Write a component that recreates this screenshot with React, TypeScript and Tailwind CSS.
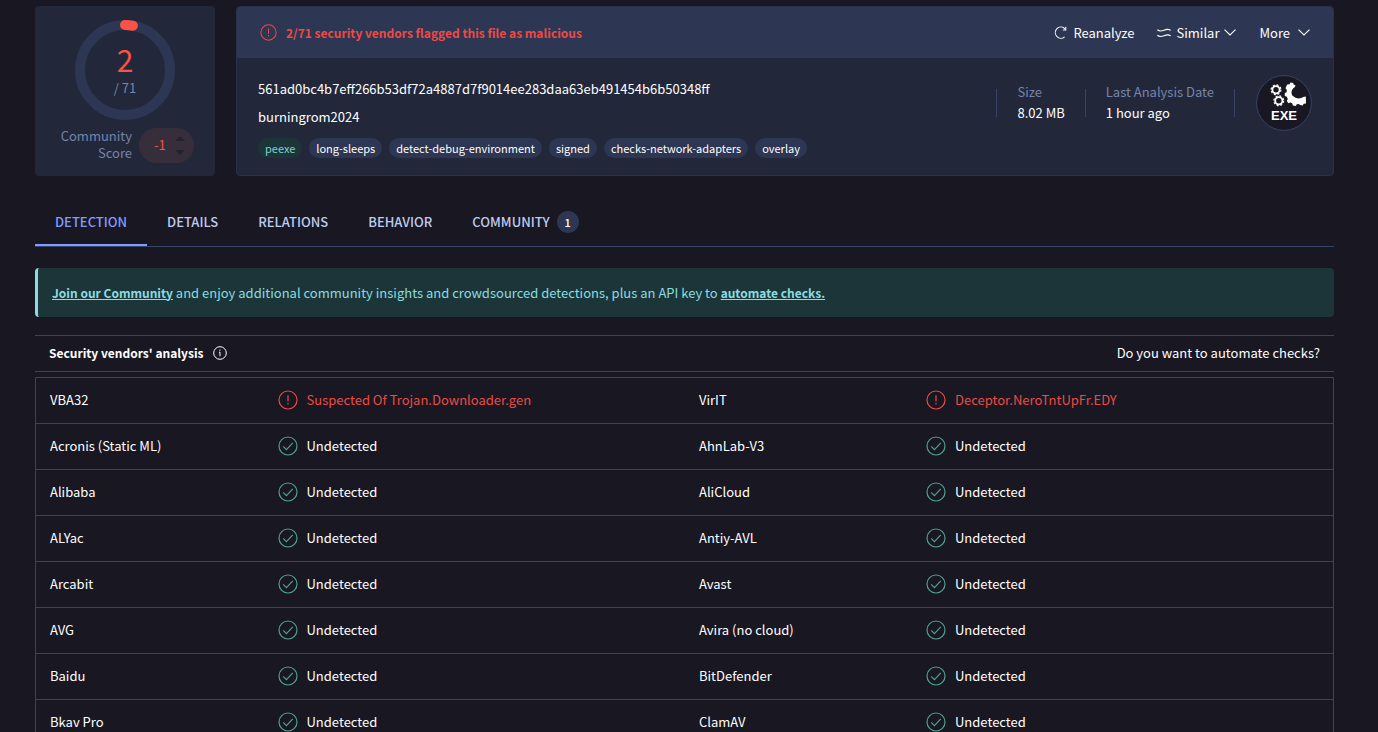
import React, { useState } from 'react';

type Verdict = {
  vendor: string;
  result?: string;
};

const tags = ['peexe', 'long-sleeps', 'detect-debug-environment', 'signed', 'checks-network-adapters', 'overlay'];

const tabs = [
  { label: 'DETECTION' },
  { label: 'DETAILS' },
  { label: 'RELATIONS' },
  { label: 'BEHAVIOR' },
  { label: 'COMMUNITY', count: 1 },
];

const rows: [Verdict, Verdict][] = [
  [
    { vendor: 'VBA32', result: 'Suspected Of Trojan.Downloader.gen' },
    { vendor: 'VirIT', result: 'Deceptor.NeroTntUpFr.EDY' },
  ],
  [{ vendor: 'Acronis (Static ML)' }, { vendor: 'AhnLab-V3' }],
  [{ vendor: 'Alibaba' }, { vendor: 'AliCloud' }],
  [{ vendor: 'ALYac' }, { vendor: 'Antiy-AVL' }],
  [{ vendor: 'Arcabit' }, { vendor: 'Avast' }],
  [{ vendor: 'AVG' }, { vendor: 'Avira (no cloud)' }],
  [{ vendor: 'Baidu' }, { vendor: 'BitDefender' }],
  [{ vendor: 'Bkav Pro' }, { vendor: 'ClamAV' }],
];

function AlertIcon({ className }: { className: string }) {
  return (
    <svg className={className} viewBox="0 0 20 20" fill="none" stroke="currentColor" strokeWidth="1.2">
      <circle cx="10" cy="10" r="9" />
      <path d="M10 5.2v6.2" />
      <path d="M10 13v1.4" />
    </svg>
  );
}

function CheckIcon({ className }: { className: string }) {
  return (
    <svg className={className} viewBox="0 0 20 20" fill="none" stroke="currentColor" strokeWidth="1.2">
      <circle cx="10" cy="10" r="9" />
      <path d="M5.2 10.4l3.2 3.2 6.4-6.8" />
    </svg>
  );
}

function InfoIcon() {
  return (
    <svg className="size-[14px]" viewBox="0 0 14 14" fill="none" stroke="currentColor">
      <circle cx="7" cy="7" r="6.3" />
      <path d="M6 6.2h1v4M7 3.6v1.2" strokeWidth="1" />
    </svg>
  );
}

function ChevronIcon() {
  return (
    <svg className="h-[7px] w-3" viewBox="0 0 12 7" fill="none" stroke="currentColor" strokeWidth="1.1">
      <path d="M0.5 0.6L6 6l5.5-5.4" />
    </svg>
  );
}

function ReanalyzeIcon() {
  return (
    <svg className="size-[13px]" viewBox="0 0 14 14" fill="none" stroke="currentColor" strokeWidth="1.1">
      <path d="M11.4 11.6A6 6 0 1 1 10.800 2.2L12.6 4" />
      <path d="M12.7 0.8v3.400H9.600" />
    </svg>
  );
}

function SimilarIcon() {
  return (
    <svg className="h-[10px] w-[14px]" viewBox="0 0 14 10" fill="none" stroke="currentColor" strokeWidth="1.1">
      <path d="M0.300 1.800C2.500 3.600 5 3 7 2.200S11.500 0.800 13.700 2.400" />
      <path d="M0.300 7.300C2.500 9.100 5 8.500 7 7.700S11.500 6.300 13.700 7.900" />
    </svg>
  );
}

function ExeBadge() {
  return (
    <svg className="size-14 shrink-0" viewBox="0 0 56 56" role="img" aria-label="EXE file">
      <circle cx="28" cy="28" r="27.4" fill="#181722" stroke="#36446a" />
      <g fill="none" stroke="#fff">
        <circle cx="20" cy="14.8" r="3.6" strokeWidth="1.8" />
        <circle cx="20" cy="14.8" r="4.9" strokeWidth="1.2" strokeDasharray="2 1.85" />
        <circle cx="22.8" cy="25.8" r="3.6" strokeWidth="1.8" />
        <circle cx="22.8" cy="25.8" r="4.9" strokeWidth="1.2" strokeDasharray="2 1.85" />
      </g>
      <path
        d="M31.2 9.4L33.6 9.2L34.6 7.4L37.2 8L37.6 9.6L39.6 10.6L38.6 12.2C34.8 14.6 34.6 19.2 37.600 21.600C40.400 24 44.600 24 47 22L49.800 21.600L50 28.400L47.600 28.800L46.800 30.600L44.200 30L42.600 29L40.800 29.200L39.800 31L36.800 30.400L36.400 28.400L34.600 27.600L32.400 28.200L30.800 26L31.800 24L30.800 21.800L28.800 21L28.800 18L30.600 17.200L30.800 14.800L29.400 13.200Z"
        fill="#fff"
      />
      <text x="28" y="45" textAnchor="middle" fill="#fff" className="font-['Liberation_Sans'] text-[13px] font-bold">
        EXE
      </text>
    </svg>
  );
}

function ScoreCard() {
  const detections = 2;
  const total = 71;
  const length = 2 * Math.PI * 45;

  return (
    <section className="flex w-[180px] shrink-0 flex-col items-center rounded bg-[#22283a] pt-[14px]">
      <div className="relative size-[100px]">
        <svg className="size-full -rotate-90" viewBox="0 0 100 100" fill="none" strokeWidth="10">
          <circle cx="50" cy="50" r="45" stroke="#2d3652" />
          <circle
            cx="50"
            cy="50"
            r="45"
            stroke="#fa5246"
            strokeLinecap="round"
            strokeDasharray={`${(length * detections) / total} ${length}`}
          />
        </svg>
        <div className="absolute inset-0 flex flex-col items-center pt-5">
          <span className="text-[30px] leading-[38px] text-[#fa5246]">{detections}</span>
          <span className="leading-5 text-[#7684ab]">{`/ ${total}`}</span>
        </div>
      </div>
      <div className="mt-[7px] flex items-center gap-[7px] pl-1">
        <div className="w-18 pb-[2px] text-right leading-[17px] text-[#7684ab]">Community Score</div>
        <div className="flex h-[35px] w-[55px] items-center justify-between rounded-full bg-[#372e3c] pr-[9px] pl-[15px] text-[#fa5246]">
          <span>-1</span>
          <span className="flex flex-col gap-[9px] text-[#22222e]">
            <button aria-label="Vote up" className="block">
              <svg className="h-[5px] w-[10px]" viewBox="0 0 10 5" fill="currentColor">
                <path d="M5 0l5 5H0z" />
              </svg>
            </button>
            <button aria-label="Vote down" className="block">
              <svg className="h-[5px] w-[10px]" viewBox="0 0 10 5" fill="currentColor">
                <path d="M5 5l5-5H0z" />
              </svg>
            </button>
          </span>
        </div>
      </div>
    </section>
  );
}

function FileCard() {
  return (
    <section className="min-w-0 flex-1 overflow-hidden rounded border border-[#2a314a] bg-[#22283a]">
      <div className="flex h-[51px] items-center justify-between bg-[#2d3652] px-[23px]">
        <div className="flex items-center gap-[9px] text-xs font-bold text-[#eb4b46]">
          <AlertIcon className="size-[17px]" />
          2/71 security vendors flagged this file as malicious
        </div>
        <div className="flex items-center gap-[23px] text-white">
          <button className="flex items-center gap-[6px]">
            <ReanalyzeIcon />
            Reanalyze
          </button>
          <button className="flex items-center gap-[5px]">
            <SimilarIcon />
            Similar
            <ChevronIcon />
          </button>
          <button className="flex items-center gap-2">
            More
            <ChevronIcon />
          </button>
        </div>
      </div>

      <div className="flex h-[117px] items-start justify-between px-[21px]">
        <div className="pt-[17px] text-white">
          <div className="leading-7">561ad0bc4b7eff266b53df72a4887d7f9014ee283daa63eb491454b6b50348ff</div>
          <div className="leading-7">burningrom2024</div>
          <div className="mt-[7px] flex gap-[7px] text-[11px] leading-5">
            {tags.map((tag) => (
              <a
                key={tag}
                href="#"
                className={`rounded-full px-[7px] ${tag === 'peexe' ? 'bg-[#1b3538] text-[#7fd1d4]' : 'bg-[#2d3652]'}`}
              >
                {tag}
              </a>
            ))}
          </div>
        </div>

        <div className="flex items-center pt-[17px]">
          <div className="flex h-7 items-center border-l border-[#36446a] px-5">
            <div className="pb-[2px] leading-[21px]">
              <div className="text-[#7684ab]">Size</div>
              <div className="text-white">8.02 MB</div>
            </div>
          </div>
          <div className="flex h-7 items-center border-l border-[#36446a] px-5">
            <div className="pb-[2px] leading-[21px]">
              <div className="text-[#7684ab]">Last Analysis Date</div>
              <div className="text-white">1 hour ago</div>
            </div>
          </div>
          <div className="h-7 w-[22px] border-l border-[#36446a]" />
          <ExeBadge />
        </div>
      </div>
    </section>
  );
}

function VerdictCells({ verdict }: { verdict: Verdict }) {
  return (
    <>
      <td className="pb-[2px] pl-[14px]">{verdict.vendor}</td>
      <td className="pb-[2px] pl-[13px]">
        {verdict.result ? (
          <span className="flex items-center gap-[9px] text-[#eb4b46]">
            <AlertIcon className="size-5" />
            {verdict.result}
          </span>
        ) : (
          <span className="flex items-center gap-[9px]">
            <CheckIcon className="size-5 text-[#4fa08f]" />
            Undetected
          </span>
        )}
      </td>
    </>
  );
}

export default function App() {
  const [active, setActive] = useState('DETECTION');

  return (
    <div className="h-screen overflow-hidden bg-[#181722] pt-[6px] pr-11 pl-[35px] font-['Noto_Sans_CJK_SC',sans-serif] text-[13px] leading-5 text-white">
      <div className="flex h-[170px] gap-[21px]">
        <ScoreCard />
        <FileCard />
      </div>

      <nav className="mt-[22px] flex h-[49px] border-b border-[#36446a] font-medium">
        {tabs.map((tab) => (
          <button
            key={tab.label}
            onClick={() => setActive(tab.label)}
            className={`flex items-center gap-[7px] border-b-2 px-5 pt-[2px] ${
              active === tab.label ? 'border-[#7f9dff] text-[#7f9dff]' : 'border-transparent text-[#bfcbee]'
            }`}
          >
            {tab.label}
            {tab.count && (
              <span className="size-[22px] rounded-full bg-[#2d3652] text-[11px] leading-[22px] text-white">{tab.count}</span>
            )}
          </button>
        ))}
      </nav>

      <div className="mt-[21px] flex h-[49px] items-center rounded-sm border-l-3 border-[#8adce0] bg-[#1b3538] pl-[14px] text-[#8adce0]">
        <p>
          <a href="#" className="text-xs font-bold underline">Join our Community</a> and enjoy additional community
          insights and crowdsourced detections, plus an API key to{' '}
          <a href="#" className="text-xs font-bold underline">automate checks.</a>
        </p>
      </div>

      <div className="mt-[18px] flex h-[37px] items-center justify-between border-y border-[#36446a] px-[14px] pb-[2px]">
        <h2 className="flex items-center gap-[10px] text-xs font-bold">
          Security vendors' analysis
          <InfoIcon />
        </h2>
        <a href="#">Do you want to automate checks?</a>
      </div>

      <table className="mt-[5px] w-full table-fixed border-collapse border border-[#36446a]">
        <colgroup>
          <col className="w-[229px]" />
          <col />
          <col className="w-[228px]" />
          <col />
        </colgroup>
        <tbody>
          {rows.map(([left, right]) => (
            <tr key={left.vendor} className="h-[46px] border-b border-[#36446a]">
              <VerdictCells verdict={left} />
              <VerdictCells verdict={right} />
            </tr>
          ))}
        </tbody>
      </table>
    </div>
  );
}
